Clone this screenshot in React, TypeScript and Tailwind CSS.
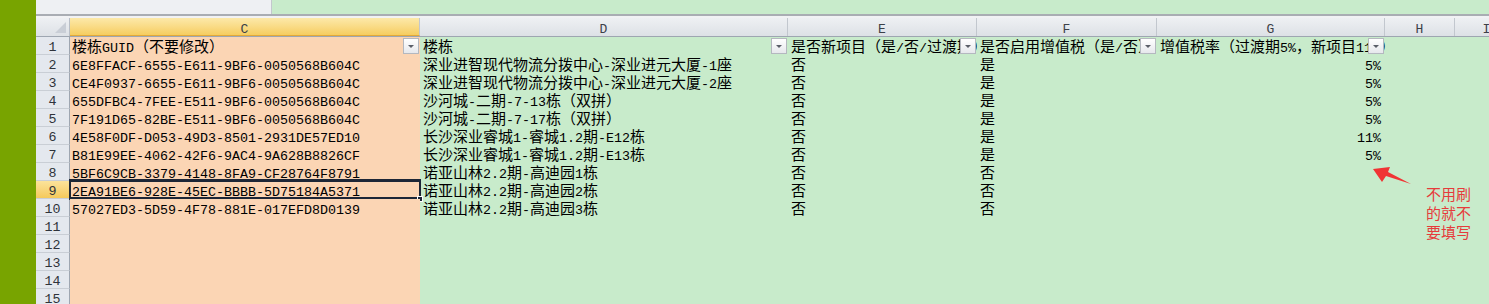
import React from "react";

type Row = { c: string; d: string; e: string; f: string; g: string };

const rows: Row[] = [
  { c: "楼栋GUID（不要修改）", d: "楼栋", e: "是否新项目（是/否/过渡期）", f: "是否启用增值税（是/否）", g: "增值税率（过渡期5%，新项目11%）" },
  { c: "6E8FFACF-6555-E611-9BF6-0050568B604C", d: "深业进智现代物流分拨中心-深业进元大厦-1座", e: "否", f: "是", g: "5%" },
  { c: "CE4F0937-6655-E611-9BF6-0050568B604C", d: "深业进智现代物流分拨中心-深业进元大厦-2座", e: "否", f: "是", g: "5%" },
  { c: "655DFBC4-7FEE-E511-9BF6-0050568B604C", d: "沙河城-二期-7-13栋（双拼）", e: "否", f: "是", g: "5%" },
  { c: "7F191D65-82BE-E511-9BF6-0050568B604C", d: "沙河城-二期-7-17栋（双拼）", e: "否", f: "是", g: "5%" },
  { c: "4E58F0DF-D053-49D3-8501-2931DE57ED10", d: "长沙深业睿城1-睿城1.2期-E12栋", e: "否", f: "是", g: "11%" },
  { c: "B81E99EE-4062-42F6-9AC4-9A628B8826CF", d: "长沙深业睿城1-睿城1.2期-E13栋", e: "否", f: "是", g: "5%" },
  { c: "5BF6C9CB-3379-4148-8FA9-CF28764F8791", d: "诺亚山林2.2期-高迪园1栋", e: "否", f: "否", g: "" },
  { c: "2EA91BE6-928E-45EC-BBBB-5D75184A5371", d: "诺亚山林2.2期-高迪园2栋", e: "否", f: "否", g: "" },
  { c: "57027ED3-5D59-4F78-881E-017EFD8D0139", d: "诺亚山林2.2期-高迪园3栋", e: "否", f: "否", g: "" },
  { c: "", d: "", e: "", f: "", g: "" },
  { c: "", d: "", e: "", f: "", g: "" },
  { c: "", d: "", e: "", f: "", g: "" },
  { c: "", d: "", e: "", f: "", g: "" },
  { c: "", d: "", e: "", f: "", g: "" },
];

// latin in a mono face (8px advance), CJK a bit wider, like SimSun in Excel
function Txt({ s }: { s: string }) {
  const runs = s.match(/[\x20-\x7e]+|[^\x20-\x7e]+/g) ?? [];
  return (
    <>
      {runs.map((r, i) =>
        /^[\x20-\x7e]/.test(r) ? (
          <span key={i} className="font-['Liberation_Mono',monospace] text-[13.33px] leading-[12px]">
            {r}
          </span>
        ) : (
          <span key={i}>{r}</span>
        ),
      )}
    </>
  );
}

function FilterBtn() {
  return (
    <div className="absolute right-[1px] top-[1px] w-[16px] h-[16px] border border-[#b4b8bf] bg-gradient-to-b from-white to-[#e6e8ec] flex items-center justify-center">
      <div className="w-0 h-0 border-l-[3px] border-r-[3px] border-t-[3px] border-l-transparent border-r-transparent border-t-[#5a5f68]" />
    </div>
  );
}

const letters = [
  { k: "C", w: "w-[350px]", sel: true },
  { k: "D", w: "w-[368px]" },
  { k: "E", w: "w-[189px]" },
  { k: "F", w: "w-[180px]" },
  { k: "G", w: "w-[228px]" },
  { k: "H", w: "w-[70px]" },
  { k: "I", w: "w-[64px]" },
];

export default function App() {
  return (
    <div className="relative flex w-[1489px] h-[304px] overflow-hidden bg-[#c8ebcb] text-black">
      <div className="w-[36px] shrink-0 bg-[#78a400]" />
      <div className="flex-1 flex flex-col overflow-hidden">
        {/* name box / formula strip */}
        <div className="flex h-[14px] shrink-0">
          <div className="w-[236px] bg-[#eef0f3] border-r border-[#c3c7cd]" />
          <div className="flex-1 bg-[#c8ebcb]" />
        </div>
        <div className="h-[2px] shrink-0 bg-[#a9adb3]" />
        <div className="h-[2px] shrink-0 bg-[#f1f2f4]" />

        {/* column headers */}
        <div className="flex h-[19px] shrink-0 border-b border-[#9ea6b1] bg-gradient-to-b from-[#eef0f3] to-[#dde1e6]">
          <div className="relative w-[34px] shrink-0 border-r border-[#b8bec7]">
            <svg className="absolute right-[3px] bottom-[3px]" width="11" height="11">
              <polygon points="11,0 11,11 0,11" fill="#c9ced6" />
            </svg>
          </div>
          {letters.map((l) => (
            <div
              key={l.k}
              className={`${l.w} shrink-0 border-r border-[#c2c7ce] pt-[5px] text-center font-['Liberation_Mono',monospace] text-[13px] leading-[13px] text-[#3c4048] ${
                l.sel ? "bg-gradient-to-b from-[#fce9a9] to-[#f6cd5f] border-b border-b-[#e2a93a]" : ""
              }`}
            >
              {l.k}
            </div>
          ))}
        </div>

        {/* rows */}
        {rows.map((r, i) => {
          const n = i + 1;
          const first = n === 1;
          const sel = n === 9;
          return (
            <div
              key={n}
              className="flex h-[18px] shrink-0 font-['Noto_Sans_CJK_SC',sans-serif] text-[15px] leading-[18px]"
            >
              <div
                className={`w-[34px] shrink-0 border-r border-b border-r-[#9ea6b1] border-b-[#c9ced5] text-center font-['Liberation_Mono',monospace] text-[13.33px] leading-[22px] text-[#2f333a] ${
                  sel ? "bg-gradient-to-b from-[#fbe39a] to-[#f5c95a]" : "bg-[#e4e8ee]"
                }`}
              >
                {n}
              </div>
              <div className="relative w-[350px] shrink-0 bg-[#fbd5b4] pl-[2px] whitespace-nowrap">
                <Txt s={r.c} />
                {first && <FilterBtn />}
                {sel && (
                  <>
                    <div className="absolute -left-[1px] -right-[1px] -top-[2px] -bottom-[1px] border-y-[3px] border-x-2 border-[#1d2636] pointer-events-none" />
                    <div className="absolute -right-[3px] -bottom-[3px] w-[6px] h-[6px] bg-[#1d2636] border border-white" />
                  </>
                )}
              </div>
              <div className="relative w-[368px] shrink-0 pl-[3px] whitespace-nowrap">
                <Txt s={r.d} />
                {first && <FilterBtn />}
              </div>
              <div className="relative w-[189px] shrink-0 pl-[3px] whitespace-nowrap overflow-hidden">
                <Txt s={r.e} />
                {first && <FilterBtn />}
              </div>
              <div className="relative w-[180px] shrink-0 pl-[3px] whitespace-nowrap overflow-hidden">
                <Txt s={r.f} />
                {first && <FilterBtn />}
              </div>
              <div
                className={`relative w-[228px] shrink-0 whitespace-nowrap ${
                  first ? "pl-[3px]" : "pr-[4px] text-right"
                }`}
              >
                <Txt s={r.g} />
                {first && <FilterBtn />}
              </div>
              <div className="w-[70px] shrink-0" />
              <div className="w-[64px] shrink-0" />
            </div>
          );
        })}
      </div>

      {/* red annotation */}
      <svg className="absolute left-[1366px] top-[162px]" width="50" height="28">
        <polygon points="7,7 24,5 22,10 45,22 20,14 16,20" fill="#f03434" />
      </svg>
      <div className="absolute left-[1426px] top-[184px] text-[15px] leading-[19px] text-[#e63b3b] font-['Noto_Sans_CJK_SC',sans-serif]">
        <div>不用刷</div>
        <div>的就不</div>
        <div>要填写</div>
      </div>
    </div>
  );
}
